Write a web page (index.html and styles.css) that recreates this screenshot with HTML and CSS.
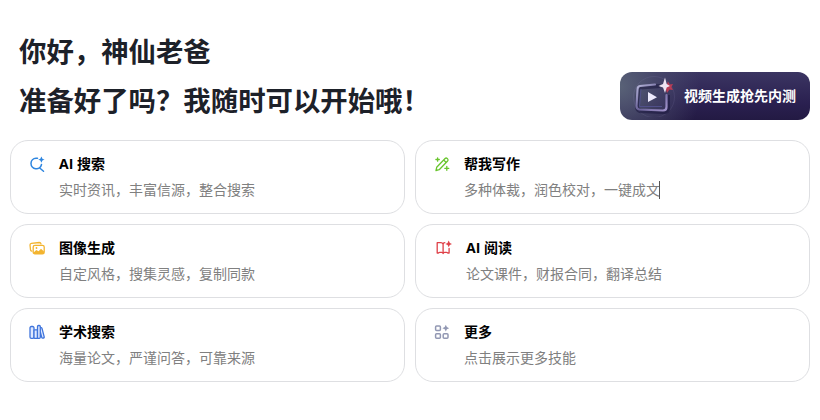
FILE: index.html
```
<!doctype html>
<html lang="zh-CN">
    <head>
        <meta charset="UTF-8" />
        <meta name="viewport" content="width=device-width, initial-scale=1.0" />
        <title>AI 助手</title>
        <link rel="stylesheet" href="styles.css">
    </head>
    <body>
        <header class="header">
            <h1>你好，神仙老爸<br />准备好了吗？我随时可以开始哦！</h1>
            <a class="promo">
                <svg class="promo-icon" width="48" height="42" viewBox="0 0 48 42" fill="none">
                    <defs>
                        <linearGradient id="frame" x1="0" y1="0" x2="1" y2="1">
                            <stop offset="0" stop-color="#b9b9dc" />
                            <stop offset="0.5" stop-color="#6a6298" />
                            <stop offset="1" stop-color="#a294cc" />
                        </linearGradient>
                    </defs>
                    <circle cx="22" cy="22" r="20.500" stroke="#8a86b8" opacity="0.15" />
                    <path d="M28 11 9 12.500Q6 13 6 16L5 32Q5 35 8 36L32 37Q36 37 36 33V20" stroke="#15123a" stroke-width="4" opacity="0.5" />
                    <path d="M23 9.500 8 11Q5.500 11.500 5.500 14.500L4.500 31Q4.500 34 7.500 34.500L31 35.500Q34.500 35.500 34.500 32V20" stroke="url(#frame)" stroke-width="2.200" stroke-linecap="round" />
                    <path d="M9 14 7.500 31.500H30" stroke="#51508a" stroke-width="1" />
                    <path d="M16 17v10l9-4.800z" fill="#eeeafd" />
                    <path d="M36 6.500 37.700 9.500 41 9l-1.600 3 1.600 3-3.500-.5L35 18l-1.500-5z" fill="#b93c55" />
                    <path d="M33 2.500 34.700 9 38 11l-3.300 1.500L33 18l-2-5.500-4.500-1.500 4.500-2z" fill="#efe4f2" />
                </svg>
                <span>视频生成抢先内测</span>
            </a>
        </header>

        <main class="cards">
            <div class="card">
                <svg class="icon search" viewBox="0 0 16 16">
                    <path d="M8.500 2.200H7A5.300 5.300 0 1 0 12.500 8.500M11 12.200l3.500 3" />
                    <path class="solid" d="M12.400.4q.5 2.700 3.200 3.200-2.700.5-3.200 3.200-.5-2.700-3.200-3.200 2.700-.5 3.200-3.200z" />
                </svg>
                <div>
                    <h2>AI 搜索</h2>
                    <p>实时资讯，丰富信源，整合搜索</p>
                </div>
            </div>
            <div class="card">
                <svg class="icon write" viewBox="0 0 16 16">
                    <path d="m2 14.500.7-3.200 8.400-8.800q1-1 2.100 0l.4.400q1 1 0 2.100L5.200 13.700zM9.700 4l2.500 2.500M3.600 1.800v3.400M1.900 3.500h3.400M12.800 10.300v4M10.800 12.300h4" />
                </svg>
                <div>
                    <h2>帮我写作</h2>
                    <p>多种体裁，润色校对，一键成文<span class="caret"></span></p>
                </div>
            </div>
            <div class="card">
                <svg class="icon image" viewBox="0 0 16 16">
                    <path d="M2.800 11.200Q1.600 11 1.500 9.700L1 5Q1 3.500 2.400 3.300l7.900-.8q1.400 0 1.700 1.300" />
                    <rect x="4.200" y="5.400" width="11" height="8.500" rx="1.700" />
                    <path class="solid" d="m4.600 12.500 2.700-2.500 2.300 1.200 2.400-2.500 3 2.800v1.400q0 1-1.200 1h-8q-1.200 0-1.200-1.200z" />
                    <circle class="solid" cx="7.500" cy="8" r=".9" />
                </svg>
                <div>
                    <h2>图像生成</h2>
                    <p>自定风格，搜集灵感，复制同款</p>
                </div>
            </div>
            <div class="card reading">
                <svg class="icon read" viewBox="0 0 16 16">
                    <path d="M8.800 2.700Q7.300 2.800 7.100 4.200 6.500 2.700 4.900 2.700H1.200V13h1.300q.4-.7 1.400-.7h1.800q1.200 0 1.400 1.200.3-1.200 1.500-1.200h1.800q.9 0 1.300.7h1.400V8.500M7.100 4.200v9.300" />
                    <path class="solid" d="M12.700.5q.5 2.900 3.300 3.400-2.800.5-3.300 3.400-.5-2.900-3.300-3.400 2.800-.5 3.300-3.400z" />
                </svg>
                <div>
                    <h2>AI 阅读</h2>
                    <p>论文课件，财报合同，翻译总结</p>
                </div>
            </div>
            <div class="card">
                <svg class="icon study" viewBox="0 0 16 16">
                    <rect class="tint" x="1" y="2.500" width="4" height="11.800" rx="1.300" />
                    <rect class="tint" x="5" y="5.800" width="3.500" height="8.500" rx=".6" />
                    <path class="tint" d="M8.500 2.500q0-1 1-1h.8q1 0 1 1v10.800q0 1-1 1H8.500zM11.300 3.900l.7-.2q.8-.2 1 .6l2.200 8.600q.2.900-.7 1.100l-.8.200q-.7.100-.9-.6l-1.500-5.800" />
                </svg>
                <div>
                    <h2>学术搜索</h2>
                    <p>海量论文，严谨问答，可靠来源</p>
                </div>
            </div>
            <div class="card">
                <svg class="icon more" viewBox="0 0 16 16">
                    <rect x="1.600" y="2" width="4.800" height="4.500" rx="1" />
                    <rect x="1.600" y="9.700" width="4.800" height="4.500" rx="1" />
                    <rect x="9.200" y="9.700" width="4.800" height="4.500" rx="1" />
                    <path class="solid" d="M11.800.8q.5 2.900 3.400 3.400-2.900.5-3.400 3.400-.5-2.900-3.400-3.400 2.900-.5 3.400-3.400z" />
                </svg>
                <div>
                    <h2>更多</h2>
                    <p>点击展示更多技能</p>
                </div>
            </div>
        </main>
    </body>
</html>
```
FILE: styles.css
```
* {
    box-sizing: border-box;
}
body {
    margin: 0;
    padding: 26px 10px 0;
    background: #fff;
    font-family: "Open Sans", "Noto Sans CJK SC", sans-serif;
}
h1,
h2,
p {
    margin: 0;
}
.header {
    display: flex;
    justify-content: space-between;
    align-items: flex-end;
    height: 98px;
    margin-bottom: 16px;
}
h1 {
    padding-left: 9px;
    color: #1d2129;
    font-family: "Noto Sans CJK SC", sans-serif;
    font-size: 27.4px;
    font-weight: 700;
    line-height: 49px;
}
.promo {
    display: flex;
    align-items: center;
    width: 190px;
    height: 48px;
    margin-bottom: 4px;
    padding-left: 12px;
    border-radius: 12px;
    background:
        radial-gradient(circle at 0 30%, #596277 0, rgba(78, 82, 112, 0.6) 20%, transparent 42%),
        linear-gradient(#3b3562, #2a2050 65%, #231a43);
    color: #fff;
    font-size: 14px;
    font-weight: 700;
    line-height: 20px;
    white-space: nowrap;
}
.promo span {
    padding-bottom: 1px;
}
.promo-icon {
    flex: none;
    margin-right: 4px;
}
.cards {
    display: grid;
    grid-template-columns: 1fr 1fr;
    gap: 10px;
}
.card {
    display: flex;
    height: 74px;
    padding: 10px 18px;
    border: 1px solid #dedfe2;
    border-radius: 18px;
}
.icon {
    flex: none;
    width: 16px;
    height: 16px;
    margin: 5px 14px 0 0;
    fill: none;
    stroke: currentColor;
    stroke-width: 1.3;
    stroke-linecap: round;
    stroke-linejoin: round;
}
.icon .solid {
    fill: currentColor;
    stroke: none;
}
.icon .tint {
    fill: #dfe9ff;
}
.search {
    color: #2d85df;
    stroke-width: 1.5;
}
.write {
    color: #69c52e;
}
.image {
    color: #f3b42f;
}
.read {
    color: #df4048;
}
.study {
    color: #3f74dc;
}
.more {
    color: #9298b3;
    stroke-width: 1.5;
}
.reading {
    padding-left: 20px;
}
h2 {
    color: #000;
    font-size: 14px;
    font-weight: 700;
    line-height: 26px;
}
p {
    color: #808080;
    font-size: 14px;
    line-height: 26px;
}
.caret {
    display: inline-block;
    width: 1px;
    height: 18px;
    margin-left: -1px;
    background: #555;
    vertical-align: -4px;
}
```
